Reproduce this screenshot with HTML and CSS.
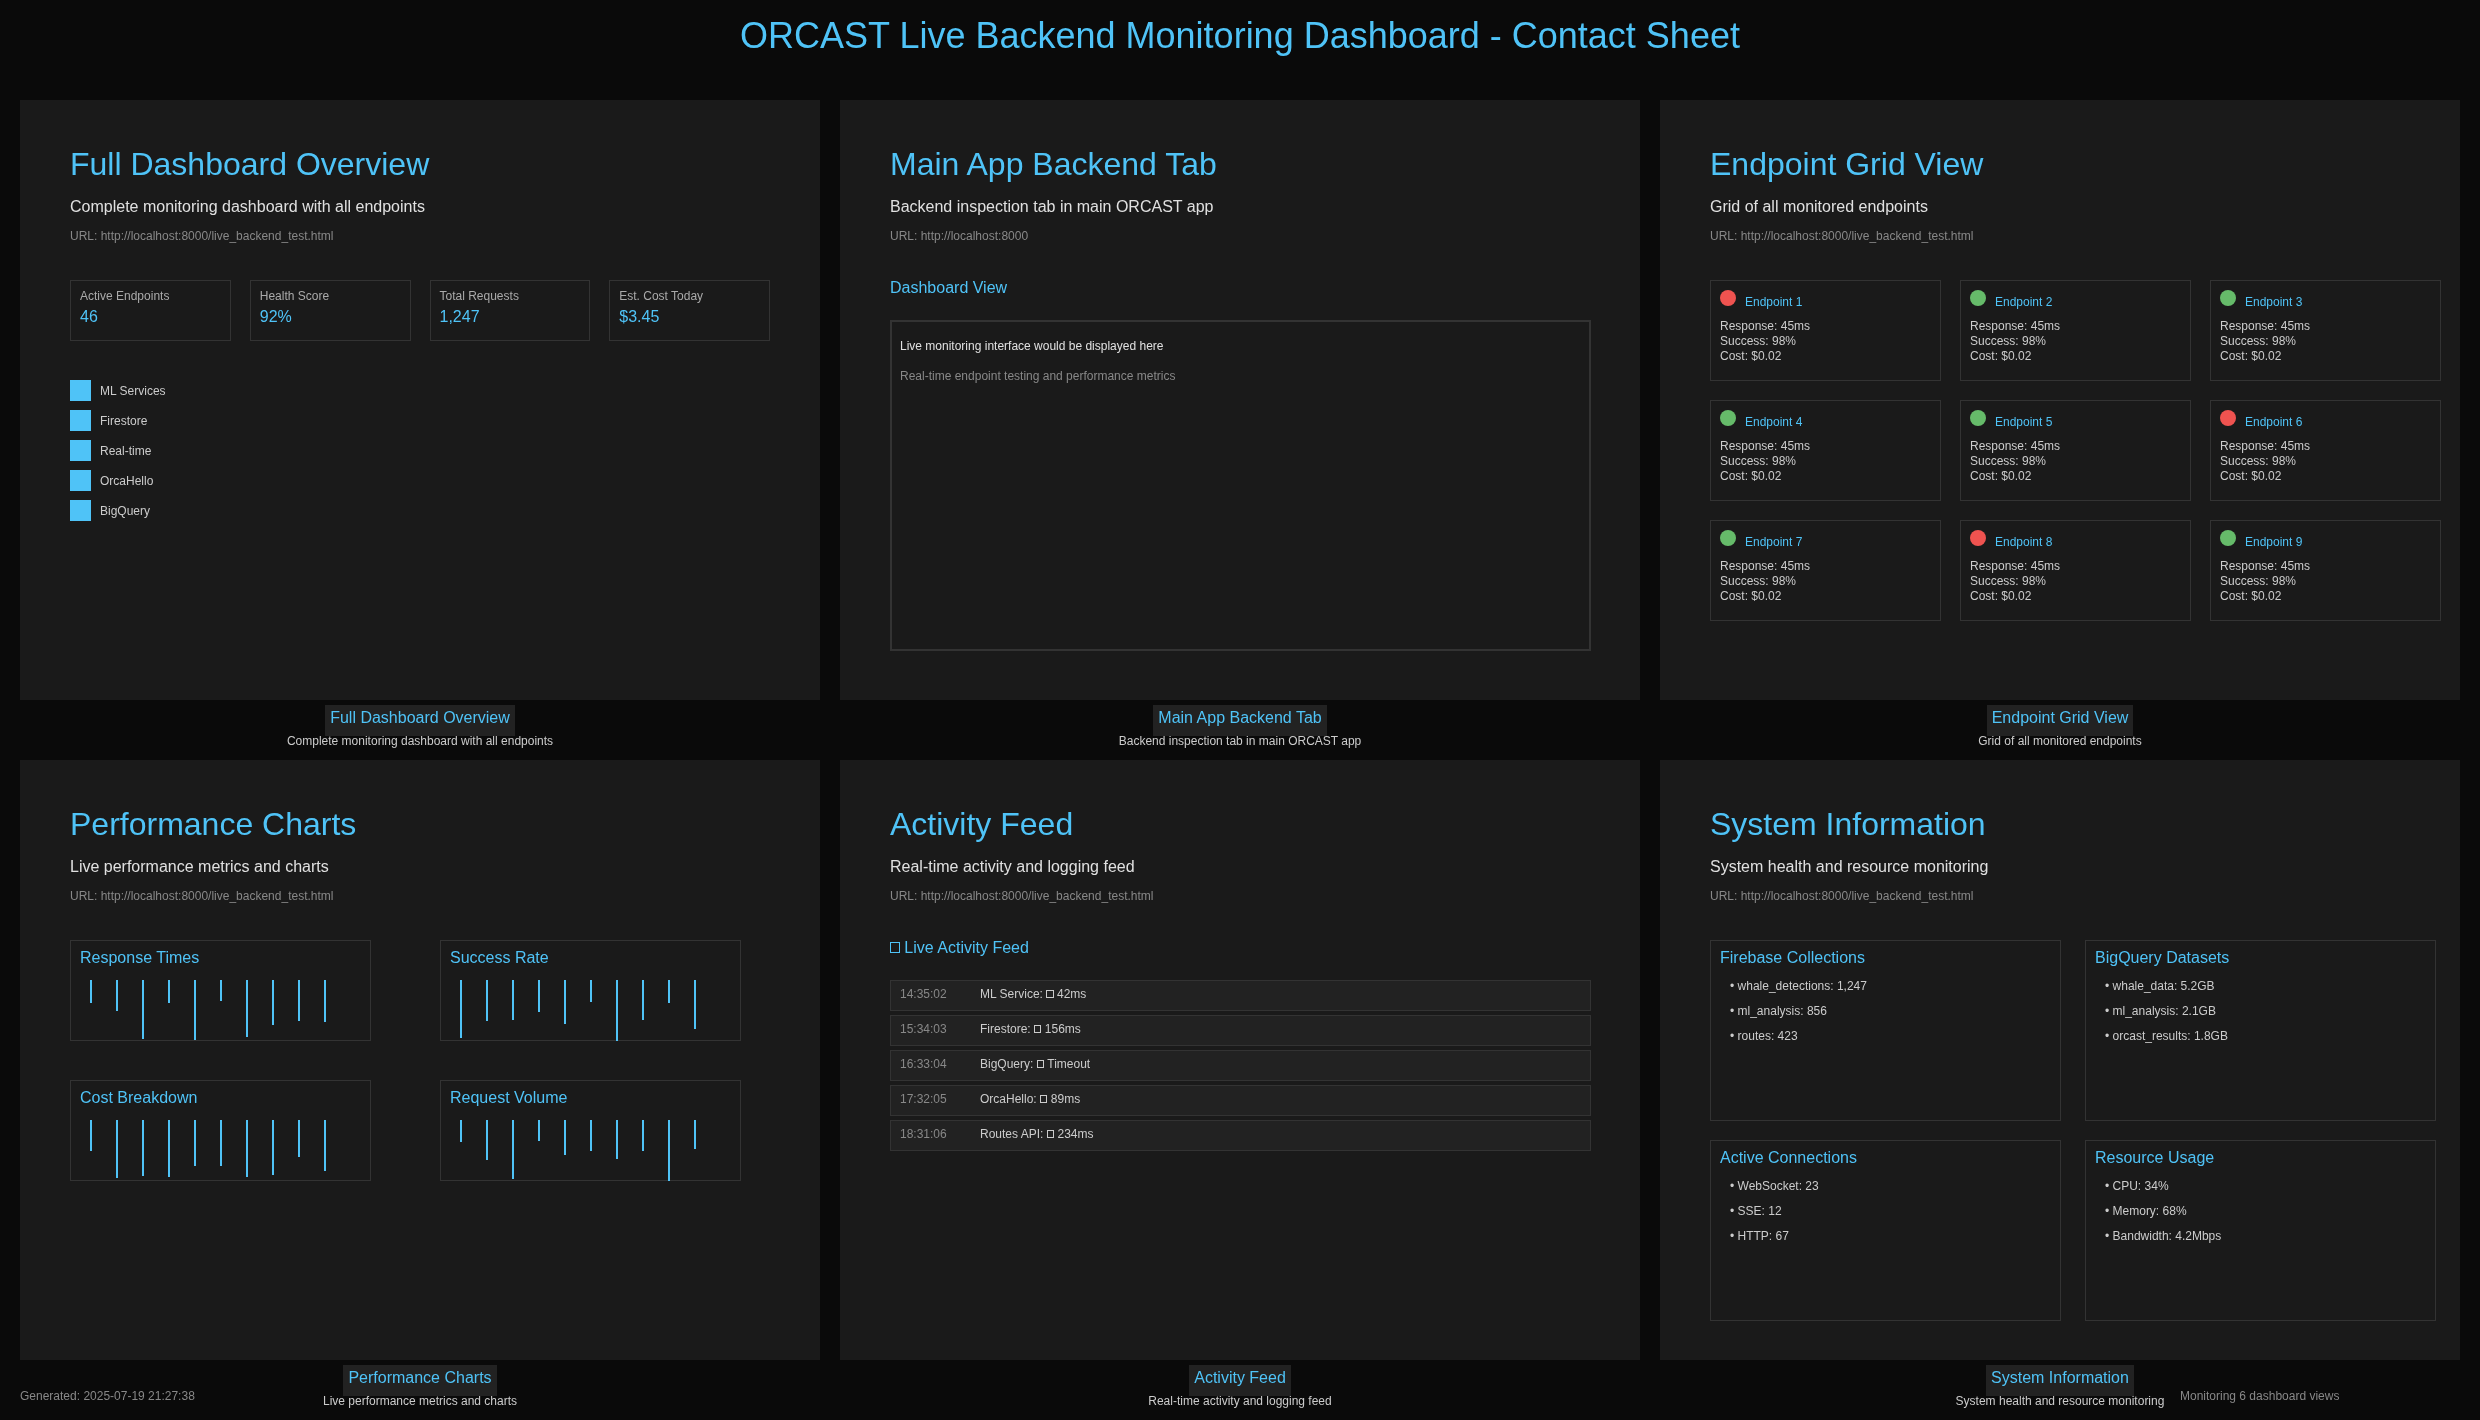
FILE: index.html
```html
<!DOCTYPE html>
<html lang="en">
<head>
  <meta charset="UTF-8" />
  <title>ORCAST Live Backend Monitoring Dashboard - Contact Sheet</title>
  <link rel="stylesheet" href="styles.css">
</head>
<body>

<h1 class="sheet-title">ORCAST Live Backend Monitoring Dashboard - Contact Sheet</h1>

<div class="sheet">

  <div class="shot">
    <div class="panel">
      <h2>Full Dashboard Overview</h2>
      <p class="desc">Complete monitoring dashboard with all endpoints</p>
      <p class="url">URL: http://localhost:8000/live_backend_test.html</p>
      <div class="stats">
        <div class="stat"><div class="stat-label">Active Endpoints</div><div class="stat-value">46</div></div>
        <div class="stat"><div class="stat-label">Health Score</div><div class="stat-value">92%</div></div>
        <div class="stat"><div class="stat-label">Total Requests</div><div class="stat-value">1,247</div></div>
        <div class="stat"><div class="stat-label">Est. Cost Today</div><div class="stat-value">$3.45</div></div>
      </div>
      <div class="legend">
        <div class="legend-row"><span class="swatch"></span>ML Services</div>
        <div class="legend-row"><span class="swatch"></span>Firestore</div>
        <div class="legend-row"><span class="swatch"></span>Real-time</div>
        <div class="legend-row"><span class="swatch"></span>OrcaHello</div>
        <div class="legend-row"><span class="swatch"></span>BigQuery</div>
      </div>
    </div>
    <div class="caption">
      <div class="caption-title">Full Dashboard Overview</div>
      <div class="caption-desc">Complete monitoring dashboard with all endpoints</div>
    </div>
  </div>

  <div class="shot">
    <div class="panel">
      <h2>Main App Backend Tab</h2>
      <p class="desc">Backend inspection tab in main ORCAST app</p>
      <p class="url">URL: http://localhost:8000</p>
      <h3 class="section">Dashboard View</h3>
      <div class="viewport">
        <p class="viewport-main">Live monitoring interface would be displayed here</p>
        <p class="viewport-sub">Real-time endpoint testing and performance metrics</p>
      </div>
    </div>
    <div class="caption">
      <div class="caption-title">Main App Backend Tab</div>
      <div class="caption-desc">Backend inspection tab in main ORCAST app</div>
    </div>
  </div>

  <div class="shot">
    <div class="panel">
      <h2>Endpoint Grid View</h2>
      <p class="desc">Grid of all monitored endpoints</p>
      <p class="url">URL: http://localhost:8000/live_backend_test.html</p>
      <div class="endpoints">
        <div class="endpoint"><div class="endpoint-head"><span class="dot red"></span>Endpoint 1</div><div>Response: 45ms</div><div>Success: 98%</div><div>Cost: $0.02</div></div>
        <div class="endpoint"><div class="endpoint-head"><span class="dot green"></span>Endpoint 2</div><div>Response: 45ms</div><div>Success: 98%</div><div>Cost: $0.02</div></div>
        <div class="endpoint"><div class="endpoint-head"><span class="dot green"></span>Endpoint 3</div><div>Response: 45ms</div><div>Success: 98%</div><div>Cost: $0.02</div></div>
        <div class="endpoint"><div class="endpoint-head"><span class="dot green"></span>Endpoint 4</div><div>Response: 45ms</div><div>Success: 98%</div><div>Cost: $0.02</div></div>
        <div class="endpoint"><div class="endpoint-head"><span class="dot green"></span>Endpoint 5</div><div>Response: 45ms</div><div>Success: 98%</div><div>Cost: $0.02</div></div>
        <div class="endpoint"><div class="endpoint-head"><span class="dot red"></span>Endpoint 6</div><div>Response: 45ms</div><div>Success: 98%</div><div>Cost: $0.02</div></div>
        <div class="endpoint"><div class="endpoint-head"><span class="dot green"></span>Endpoint 7</div><div>Response: 45ms</div><div>Success: 98%</div><div>Cost: $0.02</div></div>
        <div class="endpoint"><div class="endpoint-head"><span class="dot red"></span>Endpoint 8</div><div>Response: 45ms</div><div>Success: 98%</div><div>Cost: $0.02</div></div>
        <div class="endpoint"><div class="endpoint-head"><span class="dot green"></span>Endpoint 9</div><div>Response: 45ms</div><div>Success: 98%</div><div>Cost: $0.02</div></div>
      </div>
    </div>
    <div class="caption">
      <div class="caption-title">Endpoint Grid View</div>
      <div class="caption-desc">Grid of all monitored endpoints</div>
    </div>
  </div>

  <div class="shot">
    <div class="panel">
      <h2>Performance Charts</h2>
      <p class="desc">Live performance metrics and charts</p>
      <p class="url">URL: http://localhost:8000/live_backend_test.html</p>
      <div class="charts">
        <div class="chart">
          <div class="box-title">Response Times</div>
          <div class="bars">
            <i style="height:23px"></i><i style="height:31px"></i><i style="height:59px"></i><i style="height:23px"></i><i style="height:60px"></i><i style="height:21px"></i><i style="height:57px"></i><i style="height:45px"></i><i style="height:41px"></i><i style="height:42px"></i>
          </div>
        </div>
        <div class="chart">
          <div class="box-title">Success Rate</div>
          <div class="bars">
            <i style="height:58px"></i><i style="height:41px"></i><i style="height:40px"></i><i style="height:32px"></i><i style="height:44px"></i><i style="height:22px"></i><i style="height:61px"></i><i style="height:40px"></i><i style="height:23px"></i><i style="height:49px"></i>
          </div>
        </div>
        <div class="chart">
          <div class="box-title">Cost Breakdown</div>
          <div class="bars">
            <i style="height:31px"></i><i style="height:58px"></i><i style="height:56px"></i><i style="height:57px"></i><i style="height:46px"></i><i style="height:46px"></i><i style="height:57px"></i><i style="height:55px"></i><i style="height:37px"></i><i style="height:51px"></i>
          </div>
        </div>
        <div class="chart">
          <div class="box-title">Request Volume</div>
          <div class="bars">
            <i style="height:22px"></i><i style="height:40px"></i><i style="height:59px"></i><i style="height:21px"></i><i style="height:35px"></i><i style="height:31px"></i><i style="height:39px"></i><i style="height:31px"></i><i style="height:61px"></i><i style="height:29px"></i>
          </div>
        </div>
      </div>
    </div>
    <div class="caption">
      <div class="caption-title">Performance Charts</div>
      <div class="caption-desc">Live performance metrics and charts</div>
    </div>
  </div>

  <div class="shot">
    <div class="panel">
      <h2>Activity Feed</h2>
      <p class="desc">Real-time activity and logging feed</p>
      <p class="url">URL: http://localhost:8000/live_backend_test.html</p>
      <h3 class="section"><span class="tofu"></span> Live Activity Feed</h3>
      <div class="feed">
        <div class="feed-row"><span class="feed-time">14:35:02</span><span>ML Service: <span class="tofu"></span> 42ms</span></div>
        <div class="feed-row"><span class="feed-time">15:34:03</span><span>Firestore: <span class="tofu"></span> 156ms</span></div>
        <div class="feed-row"><span class="feed-time">16:33:04</span><span>BigQuery: <span class="tofu"></span> Timeout</span></div>
        <div class="feed-row"><span class="feed-time">17:32:05</span><span>OrcaHello: <span class="tofu"></span> 89ms</span></div>
        <div class="feed-row"><span class="feed-time">18:31:06</span><span>Routes API: <span class="tofu"></span> 234ms</span></div>
      </div>
    </div>
    <div class="caption">
      <div class="caption-title">Activity Feed</div>
      <div class="caption-desc">Real-time activity and logging feed</div>
    </div>
  </div>

  <div class="shot">
    <div class="panel">
      <h2>System Information</h2>
      <p class="desc">System health and resource monitoring</p>
      <p class="url">URL: http://localhost:8000/live_backend_test.html</p>
      <div class="sysinfo">
        <div class="sysbox">
          <div class="box-title">Firebase Collections</div>
          <div class="sysitem">• whale_detections: 1,247</div>
          <div class="sysitem">• ml_analysis: 856</div>
          <div class="sysitem">• routes: 423</div>
        </div>
        <div class="sysbox">
          <div class="box-title">BigQuery Datasets</div>
          <div class="sysitem">• whale_data: 5.2GB</div>
          <div class="sysitem">• ml_analysis: 2.1GB</div>
          <div class="sysitem">• orcast_results: 1.8GB</div>
        </div>
        <div class="sysbox">
          <div class="box-title">Active Connections</div>
          <div class="sysitem">• WebSocket: 23</div>
          <div class="sysitem">• SSE: 12</div>
          <div class="sysitem">• HTTP: 67</div>
        </div>
        <div class="sysbox">
          <div class="box-title">Resource Usage</div>
          <div class="sysitem">• CPU: 34%</div>
          <div class="sysitem">• Memory: 68%</div>
          <div class="sysitem">• Bandwidth: 4.2Mbps</div>
        </div>
      </div>
    </div>
    <div class="caption">
      <div class="caption-title">System Information</div>
      <div class="caption-desc">System health and resource monitoring</div>
    </div>
  </div>

</div>

<div class="generated">Generated: 2025-07-19 21:27:38</div>
<div class="monitoring">Monitoring 6 dashboard views</div>

</body>
</html>
```

FILE: styles.css
```css
* {
  box-sizing: border-box;
}

body {
  margin: 0;
  height: 1420px;
  overflow: hidden;
  position: relative;
  background: #0a0a0a;
  color: #ccc;
  font-family: "Liberation Sans", Arial, sans-serif;
  -webkit-font-smoothing: antialiased;
}

/* own layers, so text gets plain grey antialiasing */
.sheet-title, .sheet, .generated, .monitoring {
  will-change: transform;
}

h1, h2, h3, p {
  margin: 0;
  font-weight: normal;
}

.sheet-title {
  height: 100px;
  padding-top: 15px;
  font-size: 36px;
  line-height: 42px;
  text-align: center;
  color: #4fc3f7;
}

.sheet {
  display: grid;
  grid-template-columns: repeat(3, 800px);
  grid-auto-rows: 660px;
  column-gap: 20px;
  padding-left: 20px;
}

.panel {
  height: 600px;
  padding: 46px 50px 0;
  background: #1a1a1a;
}

.panel h2 {
  font-size: 32px;
  line-height: 37px;
  color: #4fc3f7;
}

.desc {
  margin-top: 15px;
  font-size: 16px;
  line-height: 18px;
  color: #e0e0e0;
}

.url {
  margin-top: 13px;
  font-size: 12px;
  line-height: 14px;
  color: #888;
}

/* captions under each shot */
.caption {
  padding-top: 5px;
  text-align: center;
}

.caption-title {
  display: inline-block;
  vertical-align: top;
  height: 31px;
  padding: 4px 5px 0;
  background: #222;
  font-size: 16px;
  line-height: 18px;
  color: #4fc3f7;
}

.caption-desc {
  margin-top: -1px;
  font-size: 12px;
  line-height: 12px;
  color: #ccc;
}

/* overview */
.stats {
  display: flex;
  gap: 19px;
  margin-top: 37px;
}

.stat {
  width: 161px;
  height: 61px;
  padding: 8px 9px;
  border: 1px solid #333;
}

.stat-label {
  font-size: 12px;
  line-height: 14px;
  color: #aaa;
}

.stat-value {
  margin-top: 5px;
  font-size: 16px;
  line-height: 18px;
  color: #4fc3f7;
}

.legend {
  margin-top: 39px;
}

.legend-row {
  display: flex;
  align-items: center;
  height: 21px;
  margin-bottom: 9px;
  font-size: 12px;
  color: #ccc;
}

.swatch {
  width: 21px;
  height: 21px;
  margin-right: 9px;
  background: #4fc3f7;
}

/* backend tab */
.section {
  margin-top: 36px;
  font-size: 16px;
  line-height: 18px;
  color: #4fc3f7;
}

.viewport {
  width: 701px;
  height: 331px;
  margin-top: 23px;
  padding: 17px 8px;
  border: 2px solid #333;
  font-size: 12px;
  line-height: 14px;
}

.viewport-main {
  color: #e0e0e0;
}

.viewport-sub {
  margin-top: 16px;
  color: #888;
}

/* endpoint grid */
.endpoints {
  display: grid;
  grid-template-columns: repeat(3, 231px);
  grid-auto-rows: 101px;
  gap: 19px 19px;
  margin-top: 37px;
  font-size: 12px;
  line-height: 15px;
  color: #ccc;
}

.endpoint {
  padding: 9px;
  border: 1px solid #333;
}

.endpoint-head {
  height: 29px;
  color: #4fc3f7;
}

.dot {
  display: inline-block;
  width: 16px;
  height: 16px;
  margin-right: 9px;
  border-radius: 50%;
}

.red {
  background: #ef5350;
}

.green {
  background: #66bb6a;
}

/* charts */
.charts {
  display: grid;
  grid-template-columns: repeat(2, 301px);
  grid-auto-rows: 101px;
  gap: 39px 69px;
  margin-top: 37px;
}

.chart {
  padding: 8px 9px;
  border: 1px solid #333;
}

.box-title {
  font-size: 16px;
  line-height: 18px;
  color: #4fc3f7;
}

.bars {
  display: flex;
  align-items: flex-start;
  gap: 24px;
  height: 61px;
  margin-top: 13px;
  padding-left: 10px;
}

.bars i {
  display: block;
  width: 2px;
  background: #4fc3f7;
}

/* activity feed */
.tofu {
  display: inline-block;
  width: 0.62em;
  height: 0.7em;
  border: 1px solid currentColor;
  vertical-align: -0.02em;
}

.feed {
  width: 701px;
  margin-top: 23px;
}

.feed-row {
  display: flex;
  height: 31px;
  margin-bottom: 4px;
  padding: 6px 9px 0;
  background: #222;
  border: 1px solid #333;
  font-size: 12px;
  line-height: 15px;
  color: #ccc;
}

.feed-time {
  width: 80px;
  color: #888;
}

/* system info */
.sysinfo {
  display: grid;
  grid-template-columns: repeat(2, 351px);
  grid-auto-rows: 181px;
  gap: 19px 24px;
  margin-top: 37px;
}

.sysbox {
  padding: 8px 9px;
  border: 1px solid #333;
}

.sysitem {
  margin-top: 10px;
  padding-left: 10px;
  font-size: 12px;
  line-height: 15px;
  color: #ccc;
}

.sysitem:nth-child(2) {
  margin-top: 12px;
}

/* footer notes sit on top of the bottom captions */
.generated, .monitoring {
  position: absolute;
  bottom: 17px;
  font-size: 12px;
  line-height: 14px;
  color: #888;
}

.generated {
  left: 20px;
}

.monitoring {
  left: 2180px;
}
```
